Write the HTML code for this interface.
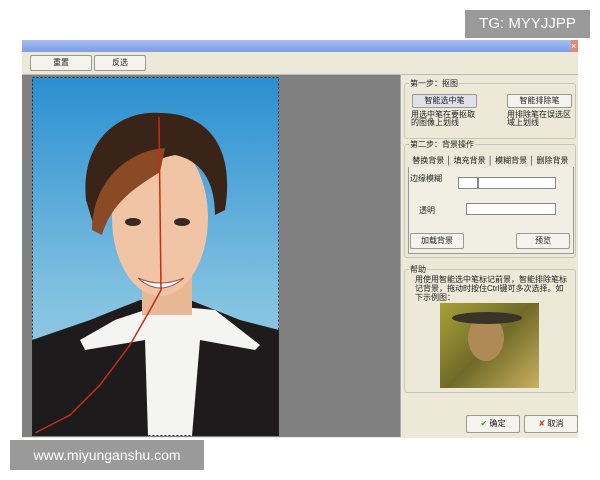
<!DOCTYPE html>
<html><head><meta charset="utf-8"><style>
body{margin:0;width:600px;height:480px;background:#fff;position:relative;overflow:hidden;font-family:"Liberation Sans","Noto Sans CJK SC",sans-serif;}
.a{position:absolute}
.cn{font-family:"Liberation Sans","Noto Sans CJK SC",sans-serif;font-size:8px;color:#222;}
.btn{position:absolute;background:#f4f3ee;border:1px solid #9a9a90;border-radius:2px;text-align:center;font-size:8px;line-height:13px;color:#222}
.grp{position:absolute;border:1px solid #c8c6b8;border-radius:3px}
.lg{position:absolute;top:-6px;left:4px;background:#ece9d8;padding:0 1px;font-size:8px;color:#222}
</style></head><body>
<div class="a" style="left:22px;top:40px;width:556px;height:398px;background:#ece9d8"></div>
<div class="a" style="left:22px;top:40px;width:556px;height:12px;background:linear-gradient(#a6bff0,#7d9de6)"></div>
<div class="a" style="left:571px;top:40px;width:7px;height:12px;background:#e08a70;color:#fff;font-size:9px;line-height:12px;overflow:hidden">×</div>
<div class="btn" style="left:30px;top:55px;width:60px;height:14px">重置</div>
<div class="btn" style="left:94px;top:55px;width:50px;height:14px">反选</div>
<div class="a" style="left:22px;top:74px;width:556px;height:1px;background:#bbb"></div>
<div class="a" style="left:22px;top:75px;width:378px;height:362px;background:#808080"></div>
<svg class="a" style="left:0;top:0" width="600" height="480" viewBox="0 0 600 480">
<defs><linearGradient id="bg" x1="0" y1="0" x2="0" y2="1"><stop offset="0" stop-color="#2a8fd0"/><stop offset="0.6" stop-color="#7fc0e0"/><stop offset="1" stop-color="#a8d4e6"/></linearGradient></defs>
<rect x="32" y="77" width="247" height="359" fill="url(#bg)"/>
<path d="M32 340 L90 320 L140 300 L190 300 L240 320 L279 330 L279 436 L32 436Z" fill="#1d1b1c"/>
<path d="M115 320 L80 340 L85 350 L145 340 L148 436 L192 436 L200 340 L255 350 L260 345 L215 310 L160 305Z" fill="#f4f4f2"/>
<rect x="142" y="270" width="50" height="45" fill="#e8b894"/>
<ellipse cx="160" cy="218" rx="48" ry="78" fill="#f0c4a4"/>
<path d="M86 200 C80 140 120 110 160 113 C210 113 235 150 225 210 L215 215 C215 180 200 160 175 155 C150 160 115 175 95 230 Z" fill="#3a2418"/>
<path d="M92 230 C92 180 130 150 165 148 L160 172 C140 185 112 200 102 235Z" fill="#8a4a26"/>
<ellipse cx="133" cy="222" rx="8" ry="4" fill="#3a2820"/><ellipse cx="182" cy="222" rx="8" ry="4" fill="#3a2820"/>
<path d="M138 278 Q160 298 184 278 Q160 288 138 278Z" fill="#fff" stroke="#a0504a"/>
<path d="M159 117 L161 290 L150 310 L130 345 L100 385 L70 415 L35 433" fill="none" stroke="#c82a1a" stroke-width="1.5"/>
<rect x="32.5" y="77.5" width="246" height="358" fill="none" stroke="#222" stroke-dasharray="2 2"/>
</svg>
<div class="a" style="left:400px;top:75px;width:1px;height:362px;background:#aaa"></div>
<div class="grp" style="left:404px;top:83px;width:170px;height:54px"><span class="lg">第一步：抠图</span></div>
<div class="btn" style="left:412px;top:94px;width:63px;height:12px;line-height:12px;background:#dfe0ea">智能选中笔</div>
<div class="btn" style="left:507px;top:94px;width:63px;height:12px;line-height:12px">智能排除笔</div>
<div class="a cn" style="left:411px;top:111px;width:70px;line-height:8px">用选中笔在要抠取的图像上划线</div>
<div class="a cn" style="left:507px;top:111px;width:66px;line-height:8px">用排除笔在误选区域上划线</div>
<div class="grp" style="left:404px;top:144px;width:170px;height:112px"><span class="lg">第二步：背景操作</span></div>
<div class="a cn" style="left:410px;top:155px;width:162px;height:12px;line-height:12px;border-bottom:1px solid #999">&nbsp;替换背景 │ 填充背景 │ 模糊背景 │ 删除背景 │</div>
<div class="a" style="left:408px;top:167px;width:164px;height:86px;border:1px solid #999;border-top:none;background:#f1efe4"></div>
<div class="a cn" style="left:410px;top:173px">边缘模糊</div>
<div class="a" style="left:458px;top:177px;width:18px;height:10px;background:#fff;border:1px solid #888"></div>
<div class="a" style="left:478px;top:177px;width:76px;height:10px;background:#fff;border:1px solid #888"></div>
<div class="a cn" style="left:419px;top:205px">透明</div>
<div class="a" style="left:466px;top:203px;width:88px;height:10px;background:#fff;border:1px solid #888"></div>
<div class="btn" style="left:410px;top:233px;width:52px;height:14px">加载背景</div>
<div class="btn" style="left:516px;top:233px;width:52px;height:14px">预览</div>
<div class="grp" style="left:404px;top:269px;width:170px;height:122px"><span class="lg">帮助</span></div>
<div class="a cn" style="left:415px;top:275px;width:155px;line-height:9px">用使用智能选中笔标记前景，智能排除笔标记背景，拖动时按住Ctrl键可多次选择。如下示例图：</div>
<div class="a" style="left:440px;top:303px;width:99px;height:85px;background:linear-gradient(135deg,#a8a23a,#6f6a28 50%,#c9b060)"></div>
<div class="a" style="left:468px;top:315px;width:36px;height:46px;border-radius:50%;background:#b08a56"></div>
<div class="a" style="left:452px;top:312px;width:70px;height:12px;border-radius:50%;background:#3a3328"></div>
<div class="btn" style="left:466px;top:415px;width:52px;height:16px;line-height:16px"><span style="color:#3a9a2a">✔</span> 确定</div>
<div class="btn" style="left:524px;top:415px;width:52px;height:16px;line-height:16px"><span style="color:#d04020">✘</span> 取消</div>
<div class="a" style="left:465px;top:10px;width:125px;height:28px;background:#9a9a9a;color:#fff;font-size:15px;line-height:28px;text-align:center">TG: MYYJJPP</div>
<div class="a" style="left:10px;top:440px;width:194px;height:30px;background:#9a9a9a;color:#fff;font-size:14px;line-height:30px;text-align:center">www.miyunganshu.com</div>
</body></html>
